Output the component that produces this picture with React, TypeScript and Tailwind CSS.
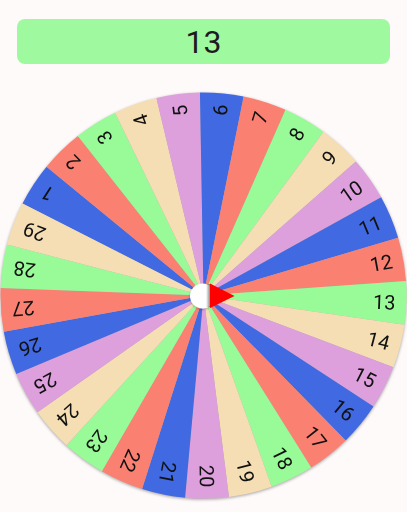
import React from "react";

const COLORS = ["#4169e1", "#fa8072", "#98fb98", "#f5deb3", "#dda0dd"];
const N = 29;
const CX = 203.5;
const CY = 203.5;
const R = 203;
const OFFSET = -1;

function pt(angleDeg: number, r: number) {
  const a = (angleDeg * Math.PI) / 180;
  return [CX + r * Math.sin(a), CY - r * Math.cos(a)];
}

export default function App() {
  const step = 360 / N;
  const segs = Array.from({ length: N }, (_, k) => {
    const i = k + 1;
    const start = OFFSET + (i - 6) * step;
    const end = start + step;
    const mid = start + step / 2;
    const [x1, y1] = pt(start, R);
    const [x2, y2] = pt(end, R);
    const d = `M ${CX} ${CY} L ${x1} ${y1} A ${R} ${R} 0 0 1 ${x2} ${y2} Z`;
    return { i, d, mid, color: COLORS[(i - 1) % 5] };
  });

  return (
    <div className="w-[407px] h-[512px] bg-[#fffafa] overflow-hidden flex flex-col" style={{ fontFamily: "Roboto, 'Noto Sans', sans-serif" }}>
      <div className="mx-[17px] mt-[19px] h-[45px] rounded-[8px] bg-[#9ffa9f] flex items-center justify-center">
        <span className="text-[32px] leading-none text-[#1d1b20]">13</span>
      </div>
      <div className="mt-[28px] relative w-[407px] h-[407px]">
        <svg width="407" height="407" viewBox="0 0 407 407" className="absolute left-0 top-0" style={{ filter: "drop-shadow(0 1px 1.5px rgba(0,0,0,0.35))" }}>
          {segs.map((s) => (
            <path key={s.i} d={s.d} fill={s.color} />
          ))}
          {segs.map((s) => (
            <text
              key={"t" + s.i}
              x={CX + 192}
              y={CY}
              textAnchor="end"
              dominantBaseline="central"
              fontSize="20"
              fill="#111"
              fontFamily="Roboto, sans-serif"
              transform={`rotate(${s.mid - 90} ${CX} ${CY})`}
            >
              {s.i}
            </text>
          ))}
        </svg>
        <svg width="407" height="407" viewBox="0 0 407 407" className="absolute left-0 top-0">
          <defs>
            <linearGradient id="sh" x1="0" x2="1" y1="0" y2="0">
              <stop offset="0" stopColor="rgba(0,0,0,0)" />
              <stop offset="1" stopColor="rgba(0,0,0,0.45)" />
            </linearGradient>
            <filter id="cs" x="-50%" y="-50%" width="200%" height="200%">
              <feDropShadow dx="0" dy="1" stdDeviation="1" floodColor="#000" floodOpacity="0.3" />
            </filter>
          </defs>
          <circle cx={CX - 1} cy={CY + 0.5} r={12.5} fill="#ffffff" filter="url(#cs)" />
          <rect x={CX + 2.5} y={CY - 11.5} width={4} height={23} fill="url(#sh)" />
          <polygon points={`${CX + 6.5},${CY - 12} ${CX + 31},${CY + 0.5} ${CX + 6.5},${CY + 12.5}`} fill="#ff0000" />
        </svg>
      </div>
    </div>
  );
}
